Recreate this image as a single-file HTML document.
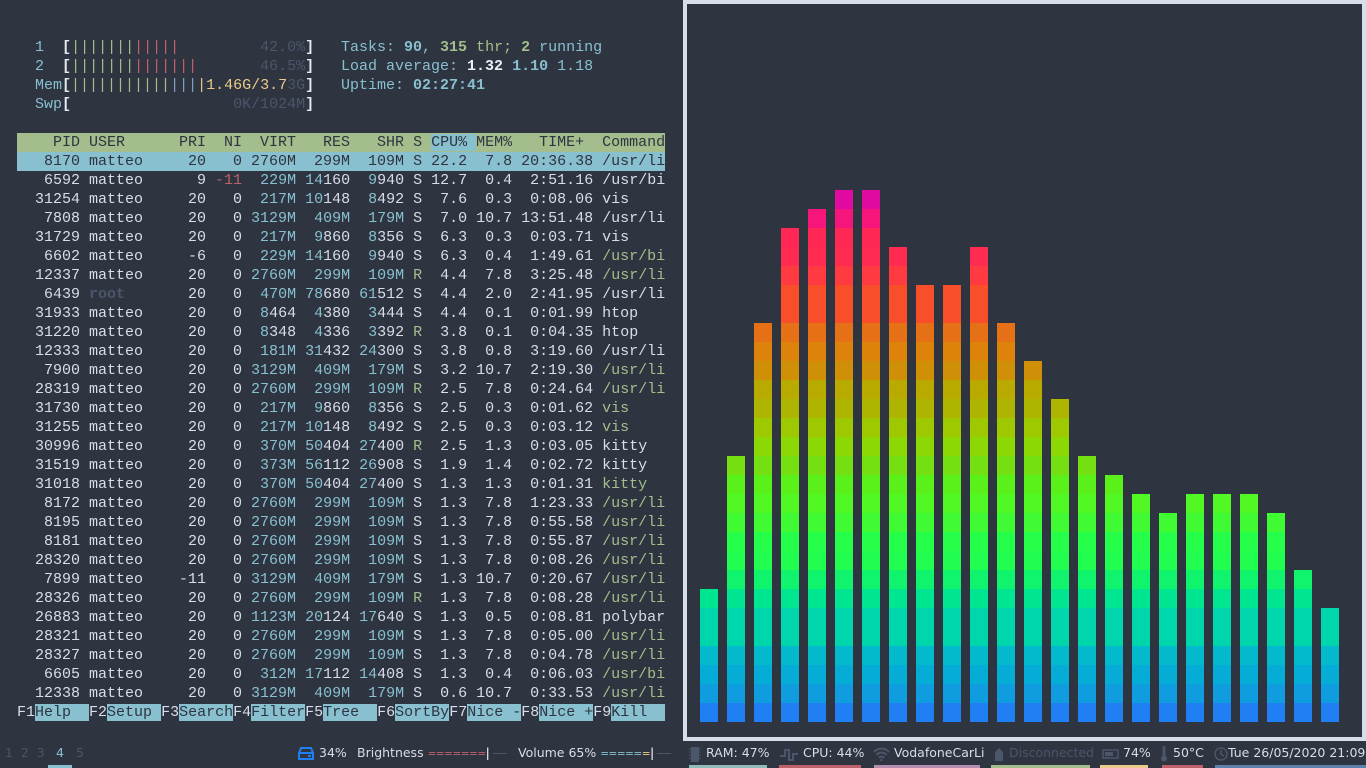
<!DOCTYPE html>
<html><head><meta charset="utf-8"><style>
*{margin:0;padding:0;box-sizing:border-box}
body{width:1366px;height:768px;background:#2e3440;overflow:hidden;position:relative;font-family:"Liberation Mono",monospace;color:#d8dee9}
pre{font-family:"Liberation Mono",monospace;font-size:15px;line-height:19px;position:absolute;white-space:pre}
em,var,kbd,cite,b,i{font-style:normal;font-weight:normal;font-family:inherit;font-size:inherit}
em{color:#88c0d0}var{color:#a3be8c}kbd{color:#bf616a}cite{color:#4c566a}
b{color:#e5e9f0;font-weight:bold}
.bl{color:#81a1c1}.y{color:#ebcb8b}
.bc{color:#88c0d0;font-weight:bold}.bg{color:#a3be8c;font-weight:bold}.bw{color:#eceff4;font-weight:bold}
.rt{color:#4c566a;font-weight:bold}
.hdr{background:#a3be8c;color:#2e3440;width:648px;display:block}
.hdr i{background:#88c0d0}
.sel{background:#88c0d0;color:#2e3440;width:648px;display:block}
.fk{background:#88c0d0;color:#2e3440}
#box{position:absolute;left:683px;top:0;width:683px;height:741px;border:4px solid #d8dee9;background:#2e3440}
.bar{position:absolute;width:18px;bottom:46px;background:linear-gradient(to top,#2080f3 0 19px,#109ddf 19px 38px,#04acd6 38px 57px,#02bacb 57px 76px,#00d6ab 76px 114px,#00e58f 114px 133px,#10f46d 133px 152px,#22fe4f 152px 171px,#25ff4a 171px 190px,#40fa34 190px 209px,#52f824 209px 228px,#5af01a 228px 247px,#74e011 247px 266px,#8bd805 266px 285px,#9ec800 285px 304px,#aeb500 304px 323px,#b9aa00 323px 342px,#cf8f06 342px 361px,#dd820a 361px 380px,#e57015 380px 399px,#f84f2a 399px 437px,#ff3a40 437px 456px,#ff2b50 456px 475px,#ff2855 475px 494px,#f5157b 494px 513px,#e10aa0 513px 532px);background-size:18px 532px;background-position:left bottom;background-repeat:no-repeat}
.sb{position:absolute;top:744px;font-family:"DejaVu Sans","Liberation Sans",sans-serif;font-size:12.5px;line-height:18px;color:#d8dee9;white-space:nowrap}
.ul{position:absolute;top:765px;height:3px}
.eq{font-size:10.5px;letter-spacing:-0.5px}
.ln{display:inline-block;width:14px;height:1px;background:#4c566a;vertical-align:middle;margin-left:3px}
</style></head><body>
<pre style="left:17px;top:38px">  <em>1</em>  <b>[</b><var>|||||||</var><kbd>|||||</kbd>         <cite>42.0%</cite><b>]</b>
  <em>2</em>  <b>[</b><var>|||||||</var><kbd>|||||||</kbd>       <cite>46.5%</cite><b>]</b>
  <em>Mem</em><b>[</b><var>|||||||||||</var><span class="bl">|||</span><span class="y">|1.46G/3.7</span><cite>3G</cite><b>]</b>
  <em>Swp</em><b>[</b>                  <cite>0K/1024M</cite><b>]</b></pre>
<pre style="left:341px;top:38px"><em>Tasks: </em><span class="bc">90</span><em>, </em><span class="bg">315</span><var> thr; </var><span class="bg">2</span><em> running</em>
<em>Load average: </em><span class="bw">1.32</span> <span class="bc">1.10</span> <em>1.18</em>
<em>Uptime: </em><span class="bc">02:27:41</span></pre>
<pre style="left:17px;top:133px"><span class="hdr">    PID USER      PRI  NI  VIRT   RES   SHR S <i>CPU% </i>MEM%   TIME+  Command</span><span class="sel">   8170 matteo     20   0 2760M  299M  109M S 22.2  7.8 20:36.38 /usr/li</span>   6592 matteo      9 <kbd>-11</kbd>  <em>229M</em> <em>14</em>160  <em>9</em>940 S 12.7  0.4  2:51.16 /usr/bi
  31254 matteo     20   0  <em>217M</em> <em>10</em>148  <em>8</em>492 S  7.6  0.3  0:08.06 vis
   7808 matteo     20   0 <em>3129M</em>  <em>409M</em>  <em>179M</em> S  7.0 10.7 13:51.48 /usr/li
  31729 matteo     20   0  <em>217M</em>  <em>9</em>860  <em>8</em>356 S  6.3  0.3  0:03.71 vis
   6602 matteo     -6   0  <em>229M</em> <em>14</em>160  <em>9</em>940 S  6.3  0.4  1:49.61 <var>/usr/bi</var>
  12337 matteo     20   0 <em>2760M</em>  <em>299M</em>  <em>109M</em> <var>R</var>  4.4  7.8  3:25.48 <var>/usr/li</var>
   6439 <span class="rt">root</span>       20   0  <em>470M</em> <em>78</em>680 <em>61</em>512 S  4.4  2.0  2:41.95 /usr/li
  31933 matteo     20   0  <em>8</em>464  <em>4</em>380  <em>3</em>444 S  4.4  0.1  0:01.99 htop
  31220 matteo     20   0  <em>8</em>348  <em>4</em>336  <em>3</em>392 <var>R</var>  3.8  0.1  0:04.35 htop
  12333 matteo     20   0  <em>181M</em> <em>31</em>432 <em>24</em>300 S  3.8  0.8  3:19.60 /usr/li
   7900 matteo     20   0 <em>3129M</em>  <em>409M</em>  <em>179M</em> S  3.2 10.7  2:19.30 <var>/usr/li</var>
  28319 matteo     20   0 <em>2760M</em>  <em>299M</em>  <em>109M</em> <var>R</var>  2.5  7.8  0:24.64 <var>/usr/li</var>
  31730 matteo     20   0  <em>217M</em>  <em>9</em>860  <em>8</em>356 S  2.5  0.3  0:01.62 <var>vis</var>
  31255 matteo     20   0  <em>217M</em> <em>10</em>148  <em>8</em>492 S  2.5  0.3  0:03.12 <var>vis</var>
  30996 matteo     20   0  <em>370M</em> <em>50</em>404 <em>27</em>400 <var>R</var>  2.5  1.3  0:03.05 kitty
  31519 matteo     20   0  <em>373M</em> <em>56</em>112 <em>26</em>908 S  1.9  1.4  0:02.72 kitty
  31018 matteo     20   0  <em>370M</em> <em>50</em>404 <em>27</em>400 S  1.3  1.3  0:01.31 <var>kitty</var>
   8172 matteo     20   0 <em>2760M</em>  <em>299M</em>  <em>109M</em> S  1.3  7.8  1:23.33 <var>/usr/li</var>
   8195 matteo     20   0 <em>2760M</em>  <em>299M</em>  <em>109M</em> S  1.3  7.8  0:55.58 <var>/usr/li</var>
   8181 matteo     20   0 <em>2760M</em>  <em>299M</em>  <em>109M</em> S  1.3  7.8  0:55.87 <var>/usr/li</var>
  28320 matteo     20   0 <em>2760M</em>  <em>299M</em>  <em>109M</em> S  1.3  7.8  0:08.26 <var>/usr/li</var>
   7899 matteo    -11   0 <em>3129M</em>  <em>409M</em>  <em>179M</em> S  1.3 10.7  0:20.67 <var>/usr/li</var>
  28326 matteo     20   0 <em>2760M</em>  <em>299M</em>  <em>109M</em> <var>R</var>  1.3  7.8  0:08.28 <var>/usr/li</var>
  26883 matteo     20   0 <em>1123M</em> <em>20</em>124 <em>17</em>640 S  1.3  0.5  0:08.81 polybar
  28321 matteo     20   0 <em>2760M</em>  <em>299M</em>  <em>109M</em> S  1.3  7.8  0:05.00 <var>/usr/li</var>
  28327 matteo     20   0 <em>2760M</em>  <em>299M</em>  <em>109M</em> S  1.3  7.8  0:04.78 <var>/usr/li</var>
   6605 matteo     20   0  <em>312M</em> <em>17</em>112 <em>14</em>408 S  1.3  0.4  0:06.03 <var>/usr/bi</var>
  12338 matteo     20   0 <em>3129M</em>  <em>409M</em>  <em>179M</em> S  0.6 10.7  0:33.53 <var>/usr/li</var>
F1<span class="fk">Help  </span>F2<span class="fk">Setup </span>F3<span class="fk">Search</span>F4<span class="fk">Filter</span>F5<span class="fk">Tree  </span>F6<span class="fk">SortBy</span>F7<span class="fk">Nice -</span>F8<span class="fk">Nice +</span>F9<span class="fk">Kill  </span></pre>

<div id="box"></div>
<div class="bar" style="left:700px;height:133px"></div>
<div class="bar" style="left:727px;height:266px"></div>
<div class="bar" style="left:754px;height:399px"></div>
<div class="bar" style="left:781px;height:494px"></div>
<div class="bar" style="left:808px;height:513px"></div>
<div class="bar" style="left:835px;height:532px"></div>
<div class="bar" style="left:862px;height:532px"></div>
<div class="bar" style="left:889px;height:475px"></div>
<div class="bar" style="left:916px;height:437px"></div>
<div class="bar" style="left:943px;height:437px"></div>
<div class="bar" style="left:970px;height:475px"></div>
<div class="bar" style="left:997px;height:399px"></div>
<div class="bar" style="left:1024px;height:361px"></div>
<div class="bar" style="left:1051px;height:323px"></div>
<div class="bar" style="left:1078px;height:266px"></div>
<div class="bar" style="left:1105px;height:247px"></div>
<div class="bar" style="left:1132px;height:228px"></div>
<div class="bar" style="left:1159px;height:209px"></div>
<div class="bar" style="left:1186px;height:228px"></div>
<div class="bar" style="left:1213px;height:228px"></div>
<div class="bar" style="left:1240px;height:228px"></div>
<div class="bar" style="left:1267px;height:209px"></div>
<div class="bar" style="left:1294px;height:152px"></div>
<div class="bar" style="left:1321px;height:114px"></div>

<div class="sb" style="left:5px;color:#4c566a">1&nbsp;&nbsp;2&nbsp;&nbsp;3</div>
<div class="sb" style="left:56px;color:#88c0d0">4</div>
<div class="sb" style="left:76px;color:#4c566a">5</div>
<div class="ul" style="left:48px;width:24px;background:#88c0d0"></div>

<svg style="position:absolute;left:298px;top:747px" width="16" height="13" viewBox="0 0 16 13"><path d="M3 1h10l2 5v6H1V6z M1 6h14" fill="none" stroke="#1f7ff3" stroke-width="2"/><rect x="10" y="8" width="3" height="2" fill="#1f7ff3"/></svg>
<div class="sb" style="left:319px">34%</div>
<div class="sb" style="left:357px">Brightness <span class="eq" style="color:#bf616a">=======</span><span style="color:#fff">|</span><span class="ln"></span></div>
<div class="sb" style="left:518px">Volume 65% <span class="eq" style="color:#88c0d0">=====</span><span class="eq" style="color:#ebcb8b">=</span><span style="color:#fff">|</span><span class="ln"></span></div>

<svg style="position:absolute;left:689px;top:747px" width="12" height="15" viewBox="0 0 12 15"><rect x="2" y="0" width="8" height="15" fill="#4c566a"/><path d="M0 2h2M0 5h2M0 8h2M0 11h2M10 2h2M10 5h2M10 8h2M10 11h2" stroke="#4c566a"/></svg>
<div class="sb" style="left:706px">RAM: 47%</div>
<svg style="position:absolute;left:780px;top:748px" width="18" height="14" viewBox="0 0 18 14"><path d="M0 8h5V2h4v10h4V6h5" fill="none" stroke="#4c566a" stroke-width="2"/></svg>
<div class="sb" style="left:803px">CPU: 44%</div>
<svg style="position:absolute;left:873px;top:747px" width="17" height="14" viewBox="0 0 17 14"><path d="M1 5a10 10 0 0 1 15 0M3.5 8a6.5 6.5 0 0 1 10 0M6 11a3 3 0 0 1 5 0" fill="none" stroke="#4c566a" stroke-width="2"/><circle cx="8.5" cy="13" r="1.2" fill="#4c566a"/></svg>
<div class="sb" style="left:894px">VodafoneCarLi</div>
<svg style="position:absolute;left:992px;top:747px" width="14" height="14" viewBox="0 0 14 14"><path d="M3 14V5l4-4 4 4v9z" fill="#4c566a"/></svg>
<div class="sb" style="left:1009px;color:#4c566a">Disconnected</div>
<svg style="position:absolute;left:1102px;top:749px" width="18" height="10" viewBox="0 0 18 10"><rect x="1" y="1" width="15" height="8" fill="none" stroke="#4c566a" stroke-width="1.5"/><rect x="3" y="3" width="8" height="4" fill="#4c566a"/></svg>
<div class="sb" style="left:1123px">74%</div>
<svg style="position:absolute;left:1160px;top:746px" width="8" height="16" viewBox="0 0 8 16"><rect x="2.5" y="0" width="3" height="11" rx="1.5" fill="#4c566a"/><circle cx="4" cy="12.5" r="3" fill="#4c566a"/></svg>
<div class="sb" style="left:1173px">50°C</div>
<svg style="position:absolute;left:1214px;top:747px" width="14" height="14" viewBox="0 0 14 14"><circle cx="7" cy="7" r="6" fill="none" stroke="#4c566a" stroke-width="1.5"/><path d="M7 3v4l3 2" fill="none" stroke="#4c566a" stroke-width="1.5"/></svg>
<div class="sb" style="left:1228px">Tue 26/05/2020 21:09</div>

<div class="ul" style="left:689px;width:78px;background:#8fbcbb"></div>
<div class="ul" style="left:779px;width:82px;background:#bf616a"></div>
<div class="ul" style="left:874px;width:106px;background:#b48ead"></div>
<div class="ul" style="left:991px;width:99px;background:#a3be8c"></div>
<div class="ul" style="left:1100px;width:48px;background:#ebcb8b"></div>
<div class="ul" style="left:1162px;width:41px;background:#bf616a"></div>
<div class="ul" style="left:1215px;width:151px;background:#5e81ac"></div>
</body></html>
